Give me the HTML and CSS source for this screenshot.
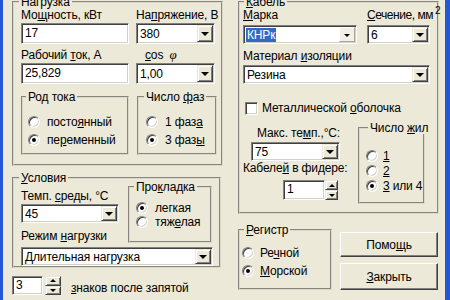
FILE: index.html
```html
<!DOCTYPE html>
<html lang="ru">
<head>
    <meta charset="UTF-8">
    <title>Расчет кабеля</title>
    <link rel="stylesheet" href="styles.css">
</head>
<body>
    <div class="window">
        <div class="col col-left">
            <fieldset class="group load">
                <legend>Нагрузка</legend>
                <div class="pair">
                    <div class="field">
                        <div class="lbl">Мо<u>щ</u>ность, кВт</div>
                        <div class="edit">17</div>
                    </div>
                    <div class="field">
                        <div class="lbl">На<u>п</u>ряжение, В</div>
                        <div class="combo tall"><span class="val">380</span><span class="drop"></span></div>
                    </div>
                    <div class="field row2">
                        <div class="lbl">Рабочий <u>т</u>ок, А</div>
                        <div class="edit">25,829</div>
                    </div>
                    <div class="field row2">
                        <div class="lbl cos"><u>c</u>os&nbsp;&nbsp;<i>φ</i></div>
                        <div class="combo tall"><span class="val">1,00</span><span class="drop"></span></div>
                    </div>
                    <fieldset class="sub current">
                        <legend>Ро<u>д</u> тока</legend>
                        <div class="radio"><i></i><span>посто<u>я</u>нный</span></div>
                        <div class="radio on"><i></i><span>пе<u>р</u>еменный</span></div>
                    </fieldset>
                    <fieldset class="sub phases">
                        <legend>Число <u>ф</u>аз</legend>
                        <div class="radio"><i></i><span>1 фаз<u>а</u></span></div>
                        <div class="radio on"><i></i><span>3 фаз<u>ы</u></span></div>
                    </fieldset>
                </div>
            </fieldset>

            <fieldset class="group terms">
                <legend><u>У</u>словия</legend>
                <div class="terms-top">
                    <div class="terms-left">
                        <div class="lbl">Темп. <u>с</u>реды, °C</div>
                        <div class="combo"><span class="val">45</span><span class="drop"></span></div>
                        <div class="lbl mode">Режим <u>н</u>агрузки</div>
                    </div>
                    <fieldset class="laying">
                        <legend>Про<u>к</u>ладка</legend>
                        <div class="radio on"><i></i><span>легкая</span></div>
                        <div class="radio"><i></i><span>тяж<u>е</u>лая</span></div>
                    </fieldset>
                </div>
                <div class="combo mode-box"><span class="val">Длительная нагрузка</span><span class="drop"></span></div>
            </fieldset>

            <div class="digits">
                <div class="spin">
                    <div class="edit">3</div>
                    <div class="updown"><span class="up"></span><span class="down"></span></div>
                </div>
                <span class="digits-text"><u>з</u>наков после запятой</span>
            </div>
        </div>

        <div class="col col-right">
            <fieldset class="group cable">
                <legend><u>К</u>абель</legend>
                <div class="cable-top">
                    <div class="field">
                        <div class="lbl"><u>М</u>арка</div>
                        <div class="combo"><span class="val"><span class="sel">КНРк</span></span><span class="drop flat"></span></div>
                    </div>
                    <div class="field">
                        <div class="lbl section"><u>С</u>ечение, мм<sup>2</sup></div>
                        <div class="combo"><span class="val">6</span><span class="drop"></span></div>
                    </div>
                </div>
                <div class="lbl insul">Материал <u>и</u>золяции</div>
                <div class="combo insul-box"><span class="val">Резина</span><span class="drop"></span></div>
                <div class="check"><i></i><span>Металлической <u>о</u>болочка</span></div>
                <div class="cable-low">
                    <div class="temps">
                        <div class="lbl right pad">Макс. те<u>м</u>п.,°C:</div>
                        <div class="combo temp-box"><span class="val">75</span><span class="drop"></span></div>
                        <div class="lbl right">Кабеле<u>й</u> в фидере:</div>
                        <div class="spin feeder">
                            <div class="edit">1</div>
                            <div class="updown"><span class="up"></span><span class="down"></span></div>
                        </div>
                    </div>
                    <fieldset class="cores">
                        <legend>Число <u>ж</u>ил</legend>
                        <div class="radio"><i></i><span><u>1</u></span></div>
                        <div class="radio"><i></i><span><u>2</u></span></div>
                        <div class="radio on"><i></i><span><u>3</u> или 4</span></div>
                    </fieldset>
                </div>
            </fieldset>

            <div class="bottom">
                <fieldset class="group register">
                    <legend><u>Р</u>егистр</legend>
                    <div class="radio"><i></i><span>Ре<u>ч</u>ной</span></div>
                    <div class="radio on"><i></i><span><u>М</u>орской</span></div>
                </fieldset>
                <div class="buttons">
                    <div class="btn help">Помо<u>щ</u>ь</div>
                    <div class="btn close"><u>З</u>акрыть</div>
                </div>
            </div>
        </div>
    </div>
</body>
</html>
```

FILE: styles.css
```css
* {
    margin: 0;
    padding: 0;
    box-sizing: border-box;
}

body {
    width: 450px;
    height: 300px;
    overflow: hidden;
    background: #2457d6;
    font-family: "Liberation Sans", Arial, sans-serif;
    font-size: 12px;
    letter-spacing: -0.15px;
    color: #000;
}

.window {
    display: flex;
    gap: 15px;
    width: 442px;
    height: 300px;
    margin-left: 3px;
    padding-left: 9px;
    background: #ece9d8;
    overflow: hidden;
}

.col {
    display: flex;
    flex-direction: column;
}

.col-left {
    width: 211px;
}

.col-right {
    width: 201px;
}

u {
    text-underline-offset: 1px;
}

/* group boxes */
fieldset {
    min-width: 0;
    border: 2px groove #dcd9c9;
}

legend {
    line-height: 12px;
    padding: 0 2px;
    margin-left: -2px;
    white-space: nowrap;
}

.lbl {
    line-height: 14px;
    white-space: nowrap;
}

.load {
    margin-top: -4px;
    padding: 0 6px 9px 7px;
}

.pair {
    display: grid;
    grid-template-columns: 108px 79px;
    column-gap: 7px;
}

.field .lbl {
    margin-bottom: 1px;
}

.row2 {
    margin-top: 4px;
}

.cos {
    padding-left: 9px;
}

.cos i {
    font-family: "Liberation Serif", serif;
    font-size: 13px;
}

.sub {
    margin-top: 7px;
}

.current {
    padding: 10px 0 4px 5px;
}

.phases {
    padding: 10px 0 4px 7px;
    width: 80px;
    margin-left: 1px;
}

/* inputs */
.edit,
.combo {
    background: #fff;
    border: 1px solid;
    border-color: #808080 #fff #fff #808080;
    box-shadow: inset 1px 1px 0 #404040, inset -1px -1px 0 #d4d0c8;
}

.edit {
    height: 21px;
    padding: 2px 3px 0;
    line-height: 15px;
}

.combo {
    display: flex;
    height: 19px;
    padding: 1px;
}

.combo.tall {
    height: 21px;
}

.combo .val {
    flex: 1;
    padding-left: 2px;
    display: flex;
    align-items: center;
    white-space: nowrap;
    overflow: hidden;
}

.sel {
    background: #316ac5;
    color: #fff;
    line-height: 14px;
    padding: 0 1px;
    margin-left: -1px;
}

.drop {
    width: 16px;
    background: #ece9d8;
    border: 1px solid;
    border-color: #ece9d8 #404040 #404040 #ece9d8;
    box-shadow: inset 1px 1px 0 #fff, inset -1px -1px 0 #808080;
    display: flex;
    align-items: center;
    justify-content: center;
}

.drop::after {
    content: "";
    border-left: 4px solid transparent;
    border-right: 4px solid transparent;
    border-top: 4px solid #000;
    margin-top: 1px;
}

.drop.flat {
    border-color: #fff #aca899 #aca899 #fff;
    box-shadow: none;
    background: #f1efe6;
}

.drop.flat::after {
    border-left-width: 3px;
    border-right-width: 3px;
    border-top-width: 3px;
}

/* radio and check */
.radio,
.check {
    display: flex;
    align-items: center;
    gap: 7px;
    height: 18px;
    white-space: nowrap;
}

.radio i,
.check i {
    width: 12px;
    height: 12px;
    flex: none;
    background: #fff;
    border: 1px solid;
    border-color: #808080 #fff #fff #808080;
    box-shadow: inset 1px 1px 0 #404040, inset -1px -1px 0 #d4d0c8;
    display: flex;
    align-items: center;
    justify-content: center;
}

.radio i {
    border-radius: 50%;
}

.radio.on i::after {
    content: "";
    width: 4px;
    height: 4px;
    border-radius: 50%;
    background: #000;
}

.check i {
    width: 13px;
    height: 13px;
}

/* conditions */
.terms {
    margin-top: 6px;
    width: 209px;
    padding: 0 6px 0 7px;
}

.terms-top {
    display: flex;
}

.terms-left {
    width: 98px;
    padding-top: 5px;
}

.terms-left .combo {
    margin-top: 1px;
}

.mode {
    margin-top: 6px;
}

.laying {
    margin: -3px 0 0 9px;
    width: 84px;
    padding: 8px 0 5px 6px;
}

.laying .radio {
    height: 14px;
}

.mode-box {
    margin-top: 4px;
}

/* digits row */
.digits {
    display: flex;
    align-items: flex-end;
    margin-top: 8px;
}

.spin {
    display: flex;
    height: 19px;
}

.spin .edit {
    width: 31px;
    height: 100%;
    padding-top: 1px;
}

.updown {
    display: flex;
    flex-direction: column;
    width: 16px;
    margin-left: 2px;
}

.updown span {
    flex: 1;
    background: #ece9d8;
    border: 1px solid;
    border-color: #ece9d8 #404040 #404040 #ece9d8;
    box-shadow: inset 1px 1px 0 #fff, inset -1px -1px 0 #808080;
    display: flex;
    align-items: center;
    justify-content: center;
}

.updown .up::after {
    content: "";
    border-left: 3px solid transparent;
    border-right: 3px solid transparent;
    border-bottom: 3px solid #000;
}

.updown .down::after {
    content: "";
    border-left: 3px solid transparent;
    border-right: 3px solid transparent;
    border-top: 3px solid #000;
}

.digits-text {
    margin-left: 10px;
    line-height: 14px;
}

/* cable */
.cable {
    margin-top: -4px;
    padding: 0 7px 8px 3px;
}

.cable legend {
    margin-left: 1px;
}

.cable-top {
    display: grid;
    grid-template-columns: 114px 63px;
    column-gap: 10px;
}

.cable-top .field .lbl {
    margin-bottom: 3px;
}

.section {
    letter-spacing: -0.45px;
}

.section sup {
    font-size: 10px;
    margin-left: 2px;
    vertical-align: 5px;
    line-height: 0;
    letter-spacing: 0;
}

.insul {
    margin-top: 5px;
}

.insul-box {
    margin-top: 2px;
}

.check {
    margin-top: 17px;
    height: 14px;
    padding-left: 2px;
    gap: 4px;
}

.cable-low {
    display: flex;
    align-items: flex-start;
    margin-top: 7px;
}

.temps {
    width: 102px;
    margin-top: 4px;
    display: flex;
    flex-direction: column;
}

.right {
    text-align: right;
}

.pad {
    padding-right: 5px;
}

.temp-box {
    margin: 2px 0 0 8px;
    width: 89px;
}

.feeder {
    margin: 5px 7px 0 auto;
    height: 20px;
}

.feeder .edit {
    width: 42px;
}

.feeder .updown {
    width: 13px;
    margin-left: 0;
}

.cores {
    margin-left: 13px;
    width: 67px;
    padding: 14px 0 9px 6px;
}

.cores legend {
    margin-left: 2px;
}

.cores .radio {
    height: 15px;
    gap: 5px;
}

/* bottom right */
.bottom {
    display: flex;
    margin-top: 10px;
}

.register {
    width: 94px;
    padding: 8px 0 6px 2px;
}

.register legend {
    margin-left: 2px;
}

.register .radio {
    gap: 6px;
}

.buttons {
    margin: 8px 0 0 8px;
    width: 98px;
    display: flex;
    flex-direction: column;
    gap: 6px;
}

.btn {
    background: #ece9d8;
    border: 1px solid;
    border-color: #fff #404040 #404040 #fff;
    box-shadow: inset -1px -1px 0 #808080;
    display: flex;
    align-items: center;
    justify-content: center;
}

.help {
    height: 25px;
}

.close {
    height: 27px;
}
```
